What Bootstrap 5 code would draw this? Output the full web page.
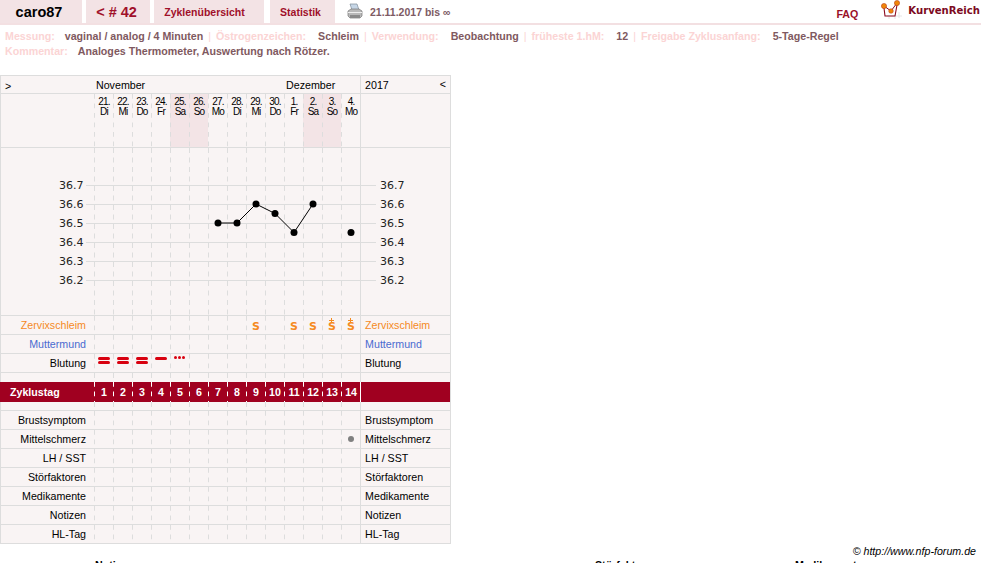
<!DOCTYPE html>
<html lang="de">
  <head>
    <meta charset="UTF-8" />
    <title>KurvenReich</title>
    <link
      href="https://cdn.jsdelivr.net/npm/bootstrap@5.3.0/dist/css/bootstrap.min.css"
      rel="stylesheet"
    />
    <style>
      html, body { overflow: hidden; }
      body {
        font-family: "Liberation Sans", Arial, sans-serif;
        font-size: 10.67px;
        line-height: 13px;
        color: #000;
        background: #fff;
      }
      /* Kopfzeile */
      .kopf {
        height: 25px;
        border-bottom: 2px solid #f3e0e2;
      }
      .reiter {
        height: 23px;
        background: #f3e3e5;
        color: #a0102a;
        font-weight: 700;
        font-size: 10.5px;
        text-align: center;
        line-height: 24px;
      }
      .reiter-name { width: 82px; color: #000; font-size: 14.5px; padding-right: 4px; }
      .reiter-zyklus { width: 64px; margin-left: 4px; font-size: 14.5px; padding-right: 3px; }
      .reiter-ueber { width: 110px; margin-left: 4px; padding-right: 9px; }
      .reiter-stat { width: 65px; margin-left: 6px; padding-right: 4px; }
      .druck { margin-left: 12px; margin-top: 3px; }
      .zeitraum {
        margin-left: 7px;
        color: #7d5a64;
        font-weight: 700;
        font-size: 10.5px;
        line-height: 24px;
      }
      .faq {
        margin-left: auto;
        margin-top: 8px;
        color: #9a1028;
        font-weight: 700;
      }
      .logo { margin-left: 23px; margin-top: 0; }
      .logo-text {
        margin-left: 5px;
        margin-right: 1px;
        font-family: "DejaVu Sans", sans-serif;
        font-weight: 700;
        font-size: 10.1px;
        line-height: 21px;
        color: #7c0a1e;
      }
      /* Angaben */
      .angaben {
        padding: 4px 0 0 5px;
        font-weight: 700;
        line-height: 15px;
        height: 50px;
        color: #7f5960;
      }
      .angaben i { font-style: normal; color: #fbd4d4; margin-right: 12px; }
      .angaben i:first-child { margin-right: 10px; }
      .angaben u { text-decoration: none; color: #fbd4d4; margin: 0 5px; font-weight: 400; }
      /* Kurve */
      .kurve {
        table-layout: fixed;
        width: 451px;
        border-collapse: separate;
        border-spacing: 0;
        background: #f9f4f4;
        border-top: 1px solid #ddd;
      }
      .kurve td {
        padding: 0;
        border-bottom: 1px solid #ddd;
        vertical-align: middle;
        overflow: visible;
      }
      .kurve td.li { border-left: 1px solid #ddd; text-align: right; padding-right: 8px; }
      .kurve td.re { border-left: 1px solid #ddd; border-right: 1px solid #ddd; padding-left: 4px; }
      .kurve td.ta {
        background-image: linear-gradient(#ddd 50%, transparent 50%);
        background-size: 1px 9.5px;
        background-repeat: repeat-y;
        text-align: center;
      }
      .kurve td.we { background-color: #f3e4e6; }
      .kurve td.leer { border-bottom: 0; }
      .z-kopf { height: 18px; }
      .kurve .z-kopf td { padding-top: 2px; }
      .z-kopf .pfeil { float: left; padding-left: 4px; line-height: 10px; }
      .z-kopf .pfeil-re { float: right; padding-right: 4px; line-height: 10px; }
      .z-datum { height: 54px; }
      .kurve .z-datum td.ta {
        vertical-align: top;
        padding: 3px 0 0 1px;
        font-size: 10px;
        line-height: 10px;
        letter-spacing: -0.8px;
      }
      .z-chart { height: 168px; }
      .z-chart svg { display: block; }
      .z-chart text {
        font-family: "DejaVu Sans", sans-serif;
        font-size: 11px;
        fill: #222;
      }
      .z-eintrag { height: 19px; }
      .kurve .z-eintrag td.ta { vertical-align: top; }
      .z-luecke { height: 9px; }
      .z-zyklustag { height: 20px; }
      .kurve .z-zyklustag td {
        background-color: #a00020;
        color: #fff;
        font-weight: 700;
        border-bottom: 0;
        border-left-color: #a00020;
      }
      .kurve .z-zyklustag td.li { text-align: left; padding-left: 9px; }
      .kurve .z-zyklustag td.ta {
        background-image: linear-gradient(#fff 50%, transparent 50%);
        padding-left: 1px;
      }
      .kurve .z-zyklustag td.re { border-left-color: #fff; border-right-color: #ddd; }
      .schleim { color: #f58a1f; }
      .muttermund { color: #4a6bd0; }
      .sy-s {
        display: block;
        color: #f58a1f;
        font-family: "DejaVu Sans", sans-serif;
        font-weight: 700;
        font-size: 11px;
        line-height: 10px;
        padding: 6px 0 0 1px;
      }
      /* Plus ueber dem S als CSS-Kreuz */
      .sy-plus {
        display: block;
        width: 5px;
        height: 5px;
        margin: 2px auto -7px;
        background:
          linear-gradient(#f58a1f, #f58a1f) center / 100% 1px no-repeat,
          linear-gradient(#f58a1f, #f58a1f) center / 1px 100% no-repeat;
      }
      .blut { display: flex; flex-direction: column; gap: 1px; align-items: center; padding-top: 3px; }
      .blut b { display: block; width: 12px; height: 3px; background: #d8000f; border-radius: 2px; }
      .blut-dots { display: flex; gap: 1px; justify-content: center; padding-top: 2px; }
      .blut-dots b { display: block; width: 3px; height: 3px; background: #d8000f; border-radius: 50%; }
      .punkt { display: block; width: 6px; height: 6px; background: #808080; border-radius: 50%; margin: 6px auto 0; }
      /* Fuss */
      .quelle {
        text-align: right;
        font-style: italic;
        padding-right: 5px;
        margin-top: 1px;
      }
      .listen { font-weight: 700; margin-top: 1px; }
      .listen-a { margin-left: 95px; width: 500px; }
      .listen-b { width: 200px; }
    </style>
  </head>
  <body>
    <div class="kopf d-flex align-items-start">
      <div class="reiter reiter-name">caro87</div>
      <div class="reiter reiter-zyklus">&lt; # 42</div>
      <div class="reiter reiter-ueber">Zyklenübersicht</div>
      <div class="reiter reiter-stat">Statistik</div>
      <svg class="druck" width="16" height="17" viewBox="0 0 16 17">
        <path d="M3 1h7l2 6H5z" fill="#c6d6e6" stroke="#7f8c99" stroke-width=".7" />
        <path d="M1 8l3-2h8l3 2v5l-2 2H3l-2-2z" fill="#b9b9b9" stroke="#777" stroke-width=".7" />
        <path d="M1 9h14v1H1z" fill="#eee" />
        <path d="M3 12h10v3H3z" fill="#8a8a8a" />
      </svg>
      <div class="zeitraum">21.11.2017 bis ∞</div>
      <div class="faq">FAQ</div>
      <svg class="logo" width="22" height="20" viewBox="0 0 22 20">
        <path d="M6 16h15M18 12v6M8 16v3M14 16v3" stroke="#e6e6e6" stroke-width="1" fill="none" />
        <path d="M3 8l1 8h10l2-11" fill="none" stroke="#8c0a1e" stroke-width="1.1" />
        <path d="M3 6l7 5 6-8" fill="none" stroke="#8c0a1e" stroke-width="1" />
        <circle cx="3" cy="6" r="2.6" fill="#f0860a" stroke="#b03010" stroke-width=".5" />
        <circle cx="10" cy="11" r="2.3" fill="#f0860a" stroke="#b03010" stroke-width=".5" />
        <circle cx="16" cy="3" r="2.6" fill="#f0860a" stroke="#b03010" stroke-width=".5" />
      </svg>
      <div class="logo-text">KurvenReich</div>
    </div>

    <div class="angaben">
      <div><i>Messung:</i>vaginal / analog / 4 Minuten<u>|</u><i>Östrogenzeichen:</i>Schleim<u>|</u><i>Verwendung:</i>Beobachtung<u>|</u><i>früheste 1.hM:</i>12<u>|</u><i>Freigabe Zyklusanfang:</i>5-Tage-Regel</div>
      <div><i>Kommentar:</i>Analoges Thermometer, Auswertung nach Rötzer.</div>
    </div>

    <table class="kurve">
      <colgroup id="spalten"></colgroup>
      <tbody id="kurve-body"></tbody>
    </table>

    <div class="quelle">© http://www.nfp-forum.de</div>
    <div class="listen d-flex">
      <div class="listen-a flex-shrink-0">Notizen</div>
      <div class="listen-b flex-shrink-0">Störfaktoren</div>
      <div class="listen-b flex-shrink-0">Medikamente</div>
    </div>

    <script>
      const tage = [
        ["21.", "Di"], ["22.", "Mi"], ["23.", "Do"], ["24.", "Fr"], ["25.", "Sa"],
        ["26.", "So"], ["27.", "Mo"], ["28.", "Di"], ["29.", "Mi"], ["30.", "Do"],
        ["1.", "Fr"], ["2.", "Sa"], ["3.", "So"], ["4.", "Mo"],
      ];

      // Spaltenbreiten
      let spalten = '<col style="width:94px" />';
      tage.forEach(() => (spalten += '<col style="width:19px" />'));
      spalten += '<col style="width:91px" />';
      document.getElementById("spalten").innerHTML = spalten;

      // Zeile mit Beschriftung links und rechts
      function zeile(name, klasse, inhalt) {
        let zellen = "";
        for (let i = 0; i < 14; i++) {
          zellen += `<td class="ta">${inhalt && inhalt[i] ? inhalt[i] : ""}</td>`;
        }
        return `<tr class="z-eintrag">
          <td class="li ${klasse}">${name}</td>${zellen}<td class="re ${klasse}">${name}</td>
        </tr>`;
      }

      function luecke() {
        let zellen = "";
        for (let i = 0; i < 14; i++) zellen += '<td class="ta leer"></td>';
        return `<tr class="z-luecke"><td class="li leer"></td>${zellen}<td class="re leer"></td></tr>`;
      }

      const s = '<span class="sy-s">S</span>';
      const sPlus = '<span class="sy-plus"></span><span class="sy-s">S</span>';
      const stark = '<div class="blut"><b></b><b></b></div>';
      const mittel = '<div class="blut"><b></b></div>';
      const leicht = '<div class="blut-dots"><b></b><b></b><b></b></div>';

      // Temperaturkurve
      const px = (tag) => 94.5 + 19 * tag - 9.5;
      const py = (t) => 185 - 148 + (36.7 - t) * 190;
      const messung = [[7, 36.5], [8, 36.5], [9, 36.6], [10, 36.55], [11, 36.45], [12, 36.6]];
      let svg = "";
      for (let i = 0; i < 14; i++) {
        const x = 94.5 + 19 * i;
        svg += `<line x1="${x}" x2="${x}" y1="0" y2="168" stroke="#ddd" stroke-dasharray="5 4.5" />`;
      }
      svg += '<line x1="360.5" x2="360.5" y1="0" y2="168" stroke="#ddd" />';
      [36.7, 36.6, 36.5, 36.4, 36.3, 36.2].forEach((t) => {
        const y = Math.round(py(t)) + 0.5;
        svg += `<line x1="86" x2="376" y1="${y}" y2="${y}" stroke="#ddd" />`;
        svg += `<text x="59" y="${y + 3}">${t.toFixed(1)}</text>`;
        svg += `<text x="380" y="${y + 3}">${t.toFixed(1)}</text>`;
      });
      svg += `<polyline fill="none" stroke="#000" points="${messung
        .map((m) => px(m[0]) + "," + py(m[1]))
        .join(" ")}" />`;
      messung.concat([[14, 36.45]]).forEach((m) => {
        svg += `<circle cx="${px(m[0])}" cy="${py(m[1])}" r="3.5" fill="#000" />`;
      });

      let html = `<tr class="z-kopf">
        <td class="li" style="text-align:left;padding-right:0"><span class="pfeil">&gt;</span></td>
        <td colspan="10" style="padding-left:2px">November</td>
        <td colspan="4" style="padding-left:2px">Dezember</td>
        <td class="re"><span class="pfeil-re">&lt;</span>2017</td>
      </tr>`;

      html += '<tr class="z-datum"><td class="li"></td>';
      tage.forEach((t) => {
        const we = t[1] === "Sa" || t[1] === "So" ? " we" : "";
        html += `<td class="ta${we}">${t[0]}<br />${t[1]}</td>`;
      });
      html += '<td class="re"></td></tr>';

      html += `<tr class="z-chart"><td colspan="16" style="border-left:1px solid #ddd;border-right:1px solid #ddd">
        <svg width="449" height="167" viewBox="1 0 449 167">${svg}</svg></td></tr>`;

      const schleim = [];
      schleim[8] = s; schleim[10] = s; schleim[11] = s; schleim[12] = sPlus; schleim[13] = sPlus;
      html += zeile("Zervixschleim", "schleim", schleim);
      html += zeile("Muttermund", "muttermund");
      html += zeile("Blutung", "", [stark, stark, stark, mittel, leicht]);
      html += luecke();

      html += '<tr class="z-zyklustag"><td class="li">Zyklustag</td>';
      tage.forEach((t, i) => (html += `<td class="ta">${i + 1}</td>`));
      html += '<td class="re"></td></tr>';
      html += luecke().replace('class="li leer"', 'class="li"').replace('class="re leer"', 'class="re"').replace(/ta leer/g, "ta");

      html += zeile("Brustsymptom", "");
      const schmerz = [];
      schmerz[13] = '<span class="punkt"></span>';
      html += zeile("Mittelschmerz", "", schmerz);
      ["LH / SST", "Störfaktoren", "Medikamente", "Notizen", "HL-Tag"].forEach((n) => {
        html += zeile(n, "");
      });

      document.getElementById("kurve-body").innerHTML = html;
    </script>
    <script src="https://cdn.jsdelivr.net/npm/bootstrap@5.3.0/dist/js/bootstrap.bundle.min.js"></script>
  </body>
</html>
